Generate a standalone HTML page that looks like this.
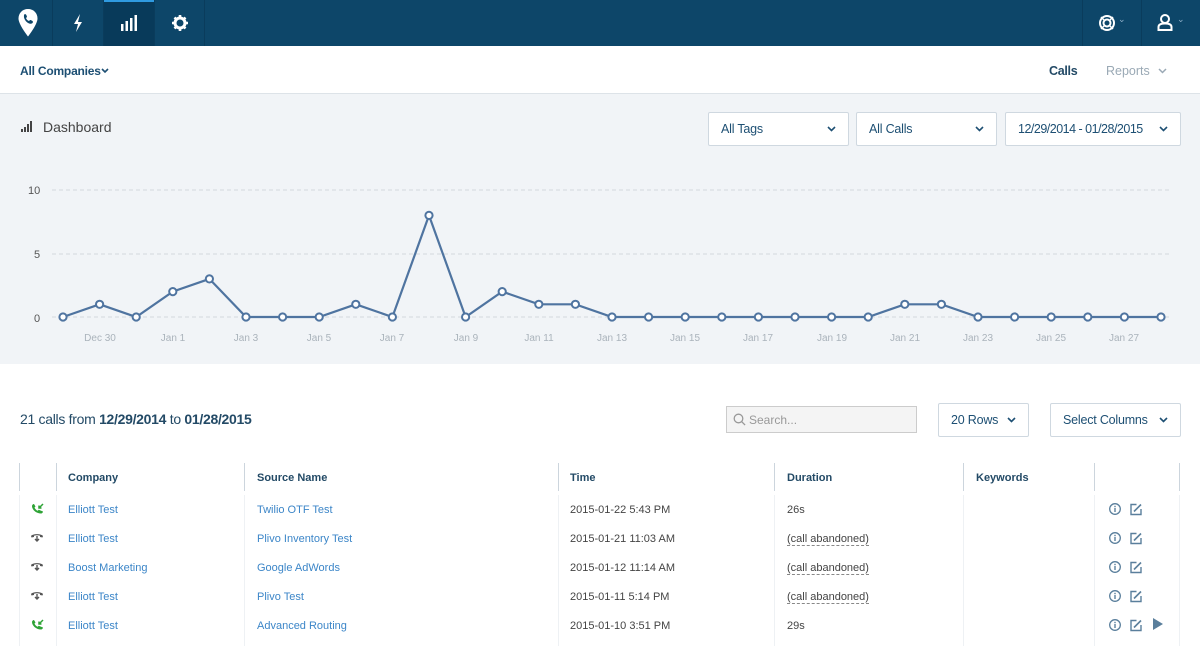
<!DOCTYPE html>
<html><head><meta charset="utf-8"><style>
*{box-sizing:border-box;margin:0;padding:0}
body{width:1200px;height:646px;overflow:hidden;background:#fff;font-family:"Liberation Sans",sans-serif;position:relative}
.a{position:absolute;white-space:nowrap}
.nav{position:absolute;left:0;top:0;width:1200px;height:46px;background:#0d4669}
.sub{position:absolute;left:0;top:46px;width:1200px;height:48px;background:#fff;border-bottom:1px solid #dde3e8}
.gray{position:absolute;left:0;top:94px;width:1200px;height:270px;background:#f1f4f7}
.sel{position:absolute;height:34px;background:#fff;border:1px solid #cfd8e0;border-radius:2px;font-size:12.5px;letter-spacing:-0.2px;color:#1d4f73;padding:9px 12px}
.sel svg{position:absolute;right:12px;top:13px}
.th{font-size:11px;font-weight:bold;color:#234a66}
.td{font-size:11px;color:#444}
.lk{font-size:11px;color:#3c86c8}
.vl{position:absolute;width:1px;background:#ccd5dd}
.vl2{position:absolute;width:1px;background:#eef1f4}
.ab{border-bottom:1px dashed #888}
</style></head><body>
<div class="nav"></div>
<div class="a" style="left:104px;top:0;width:50px;height:46px;background:#083a5a;border-top:2px solid #2f9ae0"></div>
<div class="a" style="left:52px;top:0;width:1px;height:46px;background:#0a3c5c"></div>
<div class="a" style="left:103px;top:0;width:1px;height:46px;background:#0a3c5c"></div>
<div class="a" style="left:154px;top:0;width:1px;height:46px;background:#0a3c5c"></div>
<div class="a" style="left:204px;top:0;width:1px;height:46px;background:#0a3c5c"></div>
<div class="a" style="left:1082px;top:0;width:1px;height:46px;background:#0a3c5c"></div>
<div class="a" style="left:1141px;top:0;width:1px;height:46px;background:#0a3c5c"></div>
<svg class="a" style="left:17px;top:8px" width="22" height="30" viewBox="0 0 22 30"><path d="M11 1C5.5 1 1.5 5 1.5 10.5c0 6 9.5 18 9.5 18s9.5-12 9.5-18C20.5 5 16.5 1 11 1z" fill="#fff"/><path d="M8 6c1 0 2 2 2 3l-1 1c.5 1.5 1.5 2.5 3 3l1-1c1 0 3 1 3 2-.3 1.5-2 2-3 1.7-3-.8-5.5-3.5-6-6.5C6.8 7.5 7 6.2 8 6z" fill="#0d4669"/></svg>
<svg class="a" style="left:72px;top:13px" width="12" height="20" viewBox="0 0 12 20"><path d="M8 1L2 11h4l-2 8 6-10H6z" fill="#fff"/></svg>
<svg class="a" style="left:121px;top:15px" width="16" height="16"><rect x="0" y="9" width="2.5" height="7" fill="#fff"/><rect x="4.5" y="6" width="2.5" height="10" fill="#fff"/><rect x="9" y="3" width="2.5" height="13" fill="#fff"/><rect x="13.5" y="0" width="2.5" height="16" fill="#fff"/></svg>
<svg class="a" style="left:171px;top:14px" width="18" height="18" viewBox="0 0 18 18"><circle cx="9" cy="9" r="5" fill="none" stroke="#fff" stroke-width="3"/><g stroke="#fff" stroke-width="2.6"><path d="M9 1v3M9 14v3M1 9h3M14 9h3M3.5 3.5l2 2M12.5 12.5l2 2M3.5 14.5l2-2M12.5 5.5l2-2"/></g></svg>
<svg class="a" style="left:1098px;top:14px" width="18" height="18"><circle cx="9" cy="9" r="7" fill="none" stroke="#fff" stroke-width="2"/><circle cx="9" cy="9" r="3.5" fill="none" stroke="#fff" stroke-width="2"/><g stroke="#fff" stroke-width="1.5"><path d="M3 3l3.5 3.5M15 3l-3.5 3.5M3 15l3.5-3.5M15 15l-3.5-3.5"/></g></svg>
<div class="a" style="left:1118px;top:14px;color:#8fb0c8;font-size:9px">⌄</div>
<svg class="a" style="left:1157px;top:14px" width="16" height="17"><circle cx="8" cy="5" r="4" fill="none" stroke="#fff" stroke-width="2"/><path d="M1.5 16v-3c0-2 2-3.5 6.5-3.5s6.5 1.5 6.5 3.5v3z" fill="none" stroke="#fff" stroke-width="2"/></svg>
<div class="a" style="left:1177px;top:14px;color:#8fb0c8;font-size:9px">⌄</div>

<div class="sub"></div>
<div class="a" style="left:20px;top:64px;font-size:12px;color:#1d4f73;font-weight:bold;letter-spacing:-0.2px">All Companies</div>
<svg class="a" style="left:101px;top:68px" width="8" height="6"><path d="M1 1l3 3 3-3" stroke="#1d4f73" stroke-width="1.6" fill="none"/></svg>
<div class="a" style="left:1049px;top:64px;font-size:12.5px;color:#234a66;font-weight:bold;letter-spacing:-0.3px">Calls</div>
<div class="a" style="left:1106px;top:64px;font-size:12.5px;color:#9aa9b5">Reports</div>
<svg class="a" style="left:1158px;top:68px" width="9" height="6"><path d="M1 1l3.5 3.5L8 1" stroke="#9aa9b5" stroke-width="1.5" fill="none"/></svg>

<div class="gray"></div>
<svg class="a" style="left:21px;top:121px" width="12" height="11"><rect x="0" y="8" width="2" height="3" fill="#444"/><rect x="3" y="6" width="2" height="5" fill="#444"/><rect x="6" y="3" width="2" height="8" fill="#444"/><rect x="9" y="0" width="2" height="11" fill="#444"/></svg>
<div class="a" style="left:43px;top:119px;font-size:14px;color:#444">Dashboard</div>
<div class="sel" style="left:708px;top:112px;width:141px">All Tags<svg width="9" height="6"><path d="M1 1l3.5 3.5L8 1" stroke="#1d4f73" stroke-width="1.6" fill="none"/></svg></div>
<div class="sel" style="left:856px;top:112px;width:141px">All Calls<svg width="9" height="6"><path d="M1 1l3.5 3.5L8 1" stroke="#1d4f73" stroke-width="1.6" fill="none"/></svg></div>
<div class="sel" style="left:1005px;top:112px;width:176px;letter-spacing:-0.5px">12/29/2014 - 01/28/2015<svg width="9" height="6"><path d="M1 1l3.5 3.5L8 1" stroke="#1d4f73" stroke-width="1.6" fill="none"/></svg></div>

<svg class="a" style="left:0;top:0" width="1200" height="364">
<g stroke="#d4d9de" stroke-dasharray="4,3"><line x1="52" y1="190" x2="1172" y2="190"/><line x1="52" y1="254" x2="1172" y2="254"/><line x1="52" y1="317" x2="1172" y2="317"/></g>
<g font-size="11" fill="#555" font-family="Liberation Sans"><text x="28" y="194">10</text><text x="34" y="258">5</text><text x="34" y="322">0</text></g>
<g font-size="10" fill="#aab3bb" font-family="Liberation Sans" text-anchor="middle"><text x="100" y="341">Dec 30</text><text x="173" y="341">Jan 1</text><text x="246" y="341">Jan 3</text><text x="319" y="341">Jan 5</text><text x="392" y="341">Jan 7</text><text x="466" y="341">Jan 9</text><text x="539" y="341">Jan 11</text><text x="612" y="341">Jan 13</text><text x="685" y="341">Jan 15</text><text x="758" y="341">Jan 17</text><text x="832" y="341">Jan 19</text><text x="905" y="341">Jan 21</text><text x="978" y="341">Jan 23</text><text x="1051" y="341">Jan 25</text><text x="1124" y="341">Jan 27</text></g>
<polyline fill="none" stroke="#4f74a0" stroke-width="2.2" points="63,317 99.6,304.3 136.2,317 172.8,291.6 209.4,278.9 246,317 282.6,317 319.2,317 355.8,304.3 392.4,317 429,215.4 465.6,317 502.2,291.6 538.8,304.3 575.4,304.3 612,317 648.6,317 685.2,317 721.8,317 758.4,317 795,317 831.6,317 868.2,317 904.8,304.3 941.4,304.3 978,317 1014.6,317 1051.2,317 1087.8,317 1124.4,317 1161,317"/>
<g fill="#fff" stroke="#4f74a0" stroke-width="2"><circle cx="63" cy="317" r="3.6"/><circle cx="99.6" cy="304.3" r="3.6"/><circle cx="136.2" cy="317" r="3.6"/><circle cx="172.8" cy="291.6" r="3.6"/><circle cx="209.4" cy="278.9" r="3.6"/><circle cx="246" cy="317" r="3.6"/><circle cx="282.6" cy="317" r="3.6"/><circle cx="319.2" cy="317" r="3.6"/><circle cx="355.8" cy="304.3" r="3.6"/><circle cx="392.4" cy="317" r="3.6"/><circle cx="429" cy="215.4" r="3.6"/><circle cx="465.6" cy="317" r="3.6"/><circle cx="502.2" cy="291.6" r="3.6"/><circle cx="538.8" cy="304.3" r="3.6"/><circle cx="575.4" cy="304.3" r="3.6"/><circle cx="612" cy="317" r="3.6"/><circle cx="648.6" cy="317" r="3.6"/><circle cx="685.2" cy="317" r="3.6"/><circle cx="721.8" cy="317" r="3.6"/><circle cx="758.4" cy="317" r="3.6"/><circle cx="795" cy="317" r="3.6"/><circle cx="831.6" cy="317" r="3.6"/><circle cx="868.2" cy="317" r="3.6"/><circle cx="904.8" cy="304.3" r="3.6"/><circle cx="941.4" cy="304.3" r="3.6"/><circle cx="978" cy="317" r="3.6"/><circle cx="1014.6" cy="317" r="3.6"/><circle cx="1051.2" cy="317" r="3.6"/><circle cx="1087.8" cy="317" r="3.6"/><circle cx="1124.4" cy="317" r="3.6"/><circle cx="1161" cy="317" r="3.6"/></g>
</svg>

<div class="a" style="left:20px;top:411px;font-size:14px;color:#234a66;letter-spacing:-0.3px">21 calls from <b>12/29/2014</b> to <b>01/28/2015</b></div>
<div class="a" style="left:726px;top:406px;width:191px;height:27px;background:#f4f4f4;border:1px solid #ccc;font-size:12px;color:#999;padding:6px 0 0 22px">Search...</div>
<svg class="a" style="left:733px;top:413px" width="13" height="13"><circle cx="5.5" cy="5.5" r="4.3" fill="none" stroke="#999" stroke-width="1.3"/><path d="M8.6 8.6l3.5 3.5" stroke="#999" stroke-width="1.3"/></svg>
<div class="sel" style="left:938px;top:403px;width:91px">20 Rows<svg width="9" height="6"><path d="M1 1l3.5 3.5L8 1" stroke="#1d4f73" stroke-width="1.6" fill="none"/></svg></div>
<div class="sel" style="left:1050px;top:403px;width:131px">Select Columns<svg width="9" height="6"><path d="M1 1l3.5 3.5L8 1" stroke="#1d4f73" stroke-width="1.6" fill="none"/></svg></div>

<div class="vl" style="left:19px;top:463px;height:28px"></div>
<div class="vl" style="left:56px;top:463px;height:28px"></div>
<div class="vl" style="left:244px;top:463px;height:28px"></div>
<div class="vl" style="left:558px;top:463px;height:28px"></div>
<div class="vl" style="left:774px;top:463px;height:28px"></div>
<div class="vl" style="left:963px;top:463px;height:28px"></div>
<div class="vl" style="left:1094px;top:463px;height:28px"></div>
<div class="vl" style="left:1179px;top:463px;height:28px"></div>
<div class="vl2" style="left:19px;top:495px;height:151px"></div>
<div class="vl2" style="left:56px;top:495px;height:151px"></div>
<div class="vl2" style="left:244px;top:495px;height:151px"></div>
<div class="vl2" style="left:558px;top:495px;height:151px"></div>
<div class="vl2" style="left:774px;top:495px;height:151px"></div>
<div class="vl2" style="left:963px;top:495px;height:151px"></div>
<div class="vl2" style="left:1094px;top:495px;height:151px"></div>
<div class="vl2" style="left:1179px;top:495px;height:151px"></div>
<div class="a th" style="left:68px;top:472px">Company</div>
<div class="a th" style="left:257px;top:472px">Source Name</div>
<div class="a th" style="left:570px;top:472px">Time</div>
<div class="a th" style="left:787px;top:472px">Duration</div>
<div class="a th" style="left:976px;top:472px">Keywords</div>

<svg class="a" style="left:0;top:495px" width="1200" height="151">
<defs>
<g id="in"><path d="M0 2c0-1 1-2 2-2l1.5 2.5-1 1c.6 1.5 1.8 2.7 3.2 3.3l1-1L11 7.5c0 1-1 2-2 2C4 9.5 0 5.5 0 2z" fill="#2ea336"/><path d="M11 0L7 4M7 1.5V4h2.5" stroke="#2ea336" stroke-width="1.5" fill="none"/></g>
<g id="ab"><path d="M0 4c2-2.5 10-2.5 12 0l-.5 1.5-2.5-.5v-1.3c-2-.6-4-.6-6 0V5L.5 5.5z" fill="#555"/><path d="M6 4v5M4 7l2 2 2-2" stroke="#555" stroke-width="1.4" fill="none"/></g>
<g id="ic"><circle cx="6" cy="6" r="5.3" fill="none" stroke="#5a7f9c" stroke-width="1.3"/><rect x="5.3" y="5" width="1.4" height="4" fill="#5a7f9c"/><rect x="5.3" y="2.8" width="1.4" height="1.4" fill="#5a7f9c"/><path d="M27.5 1.5h-5.5v10h10V6" fill="none" stroke="#5a7f9c" stroke-width="1.4"/><path d="M25 8.5l7-7" stroke="#5a7f9c" stroke-width="1.6"/></g>
</defs>
<use href="#in" x="32" y="9"/><use href="#ab" x="31" y="37"/><use href="#ab" x="31" y="66"/><use href="#ab" x="31" y="95"/><use href="#in" x="32" y="125"/>
<use href="#ic" x="1109" y="8"/><use href="#ic" x="1109" y="37"/><use href="#ic" x="1109" y="66"/><use href="#ic" x="1109" y="95"/><use href="#ic" x="1109" y="124"/>
<path d="M1153 123v12l10-6z" fill="#5a7f9c"/>
</svg>
<div class="a lk" style="left:68px;top:504px">Elliott Test</div>
<div class="a lk" style="left:68px;top:533px">Elliott Test</div>
<div class="a lk" style="left:68px;top:562px">Boost Marketing</div>
<div class="a lk" style="left:68px;top:591px">Elliott Test</div>
<div class="a lk" style="left:68px;top:620px">Elliott Test</div>
<div class="a lk" style="left:257px;top:504px">Twilio OTF Test</div>
<div class="a lk" style="left:257px;top:533px">Plivo Inventory Test</div>
<div class="a lk" style="left:257px;top:562px">Google AdWords</div>
<div class="a lk" style="left:257px;top:591px">Plivo Test</div>
<div class="a lk" style="left:257px;top:620px">Advanced Routing</div>
<div class="a td" style="left:570px;top:504px">2015-01-22 5:43 PM</div>
<div class="a td" style="left:570px;top:533px">2015-01-21 11:03 AM</div>
<div class="a td" style="left:570px;top:562px">2015-01-12 11:14 AM</div>
<div class="a td" style="left:570px;top:591px">2015-01-11 5:14 PM</div>
<div class="a td" style="left:570px;top:620px">2015-01-10 3:51 PM</div>
<div class="a td" style="left:787px;top:504px">26s</div>
<div class="a td" style="left:787px;top:533px"><span class="ab">(call abandoned)</span></div>
<div class="a td" style="left:787px;top:562px"><span class="ab">(call abandoned)</span></div>
<div class="a td" style="left:787px;top:591px"><span class="ab">(call abandoned)</span></div>
<div class="a td" style="left:787px;top:620px">29s</div>
</body></html>
